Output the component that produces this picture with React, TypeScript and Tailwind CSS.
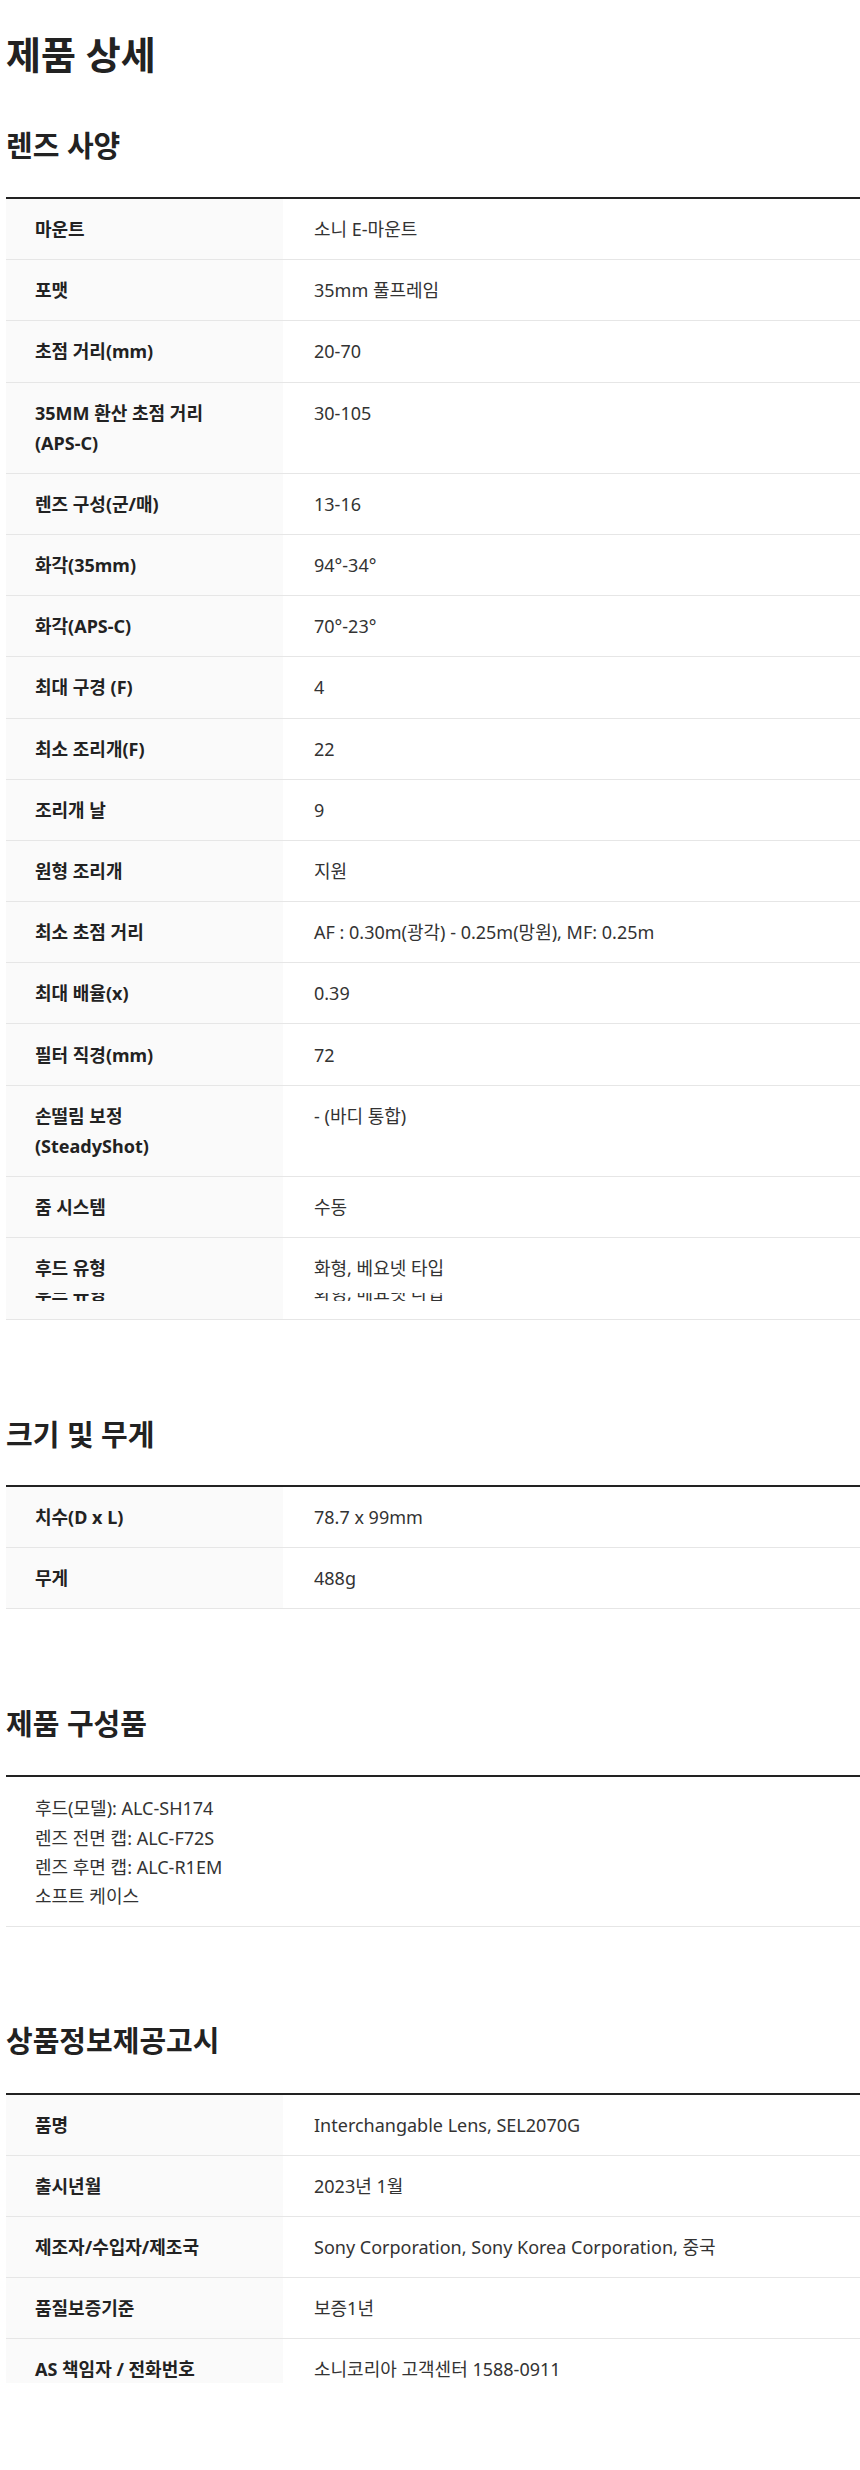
const lensSpecs: [string, string][] = [
  ['마운트', '소니 E-마운트'],
  ['포맷', '35mm 풀프레임'],
  ['초점 거리(mm)', '20-70'],
  ['35MM 환산 초점 거리\n(APS-C)', '30-105'],
  ['렌즈 구성(군/매)', '13-16'],
  ['화각(35mm)', '94°-34°'],
  ['화각(APS-C)', '70°-23°'],
  ['최대 구경 (F)', '4'],
  ['최소 조리개(F)', '22'],
  ['조리개 날', '9'],
  ['원형 조리개', '지원'],
  ['최소 초점 거리', 'AF : 0.30m(광각) - 0.25m(망원), MF: 0.25m'],
  ['최대 배율(x)', '0.39'],
  ['필터 직경(mm)', '72'],
  ['손떨림 보정\n(SteadyShot)', '- (바디 통합)'],
  ['줌 시스템', '수동'],
]

const sizeSpecs: [string, string][] = [
  ['치수(D x L)', '78.7 x 99mm'],
  ['무게', '488g'],
]

const items = ['후드(모델): ALC-SH174', '렌즈 전면 캡: ALC-F72S', '렌즈 후면 캡: ALC-R1EM', '소프트 케이스']

const notice: [string, string][] = [
  ['품명', 'Interchangable Lens, SEL2070G'],
  ['출시년월', '2023년 1월'],
  ['제조자/수입자/제조국', 'Sony Corporation, Sony Korea Corporation, 중국'],
  ['품질보증기준', '보증1년'],
]

function Row({ label, value }: { label: string; value: string }) {
  return (
    <div className="flex border-b border-[#e6e6e6]">
      <div className="w-[277px] shrink-0 bg-[#fafafa] pl-[29px] pr-4 py-[15.1px] leading-[30px] font-bold text-[#222] whitespace-pre-line">
        {label}
      </div>
      <div className="flex-1 pl-[31px] py-[15.1px] leading-[30px] text-[#333]">{value}</div>
    </div>
  )
}

function Heading({ children, className }: { children: string; className: string }) {
  return <h2 className={`text-[29px] leading-[40px] font-bold text-[#222] ${className}`}>{children}</h2>
}

export default function App() {
  return (
    <div className="min-h-[2470px] bg-white pl-[6px] pt-[30px] font-['Noto_Sans','Noto_Sans_CJK_KR',sans-serif] text-[18px]">
      <h1 className="text-[38px] leading-[48px] font-bold text-[#222]">제품 상세</h1>

      <Heading className="mt-[48px] mb-[31px]">렌즈 사양</Heading>
      <div className="border-t-2 border-[#222]">
        {lensSpecs.map(([l, v]) => (
          <Row key={l} label={l} value={v} />
        ))}
        <div className="flex h-[82px] border-b border-[#e6e6e6]">
          <div className="w-[277px] shrink-0 bg-[#fafafa] pl-[29px] pt-[15.1px] font-bold text-[#222]">
            <div className="leading-[30px]">후드 유형</div>
            <div className="mt-[10px] h-[8px] overflow-hidden">
              <div className="-mt-[15px] leading-[30px]">후드 유형</div>
            </div>
          </div>
          <div className="flex-1 pl-[31px] pt-[15.1px] text-[#333]">
            <div className="leading-[30px]">화형, 베요넷 타입</div>
            <div className="mt-[10px] h-[8px] overflow-hidden">
              <div className="-mt-[15px] leading-[30px]">화형, 베요넷 타입</div>
            </div>
          </div>
        </div>
      </div>

      <Heading className="mt-[95px] mb-[30px]">크기 및 무게</Heading>
      <div className="border-t-2 border-[#222]">
        {sizeSpecs.map(([l, v]) => (
          <Row key={l} label={l} value={v} />
        ))}
      </div>

      <Heading className="mt-[95px] mb-[31px]">제품 구성품</Heading>
      <div className="border-t-2 border-b border-t-[#222] border-b-[#e6e6e6] pl-[29px] pt-[17px] pb-[14px] text-[#333]">
        {items.map((t) => (
          <p key={t} className="leading-[29.3px]">
            {t}
          </p>
        ))}
      </div>

      <Heading className="mt-[94px] mb-[32px]">상품정보제공고시</Heading>
      <div className="border-t-2 border-[#222]">
        {notice.map(([l, v]) => (
          <Row key={l} label={l} value={v} />
        ))}
        <div className="flex h-[44px] overflow-hidden">
          <div className="w-[277px] shrink-0 bg-[#fafafa] pl-[29px] py-[15.1px] leading-[30px] font-bold text-[#222]">
            AS 책임자 / 전화번호
          </div>
          <div className="flex-1 pl-[31px] py-[15.1px] leading-[30px] text-[#333]">소니코리아 고객센터 1588-0911</div>
        </div>
      </div>
    </div>
  )
}
